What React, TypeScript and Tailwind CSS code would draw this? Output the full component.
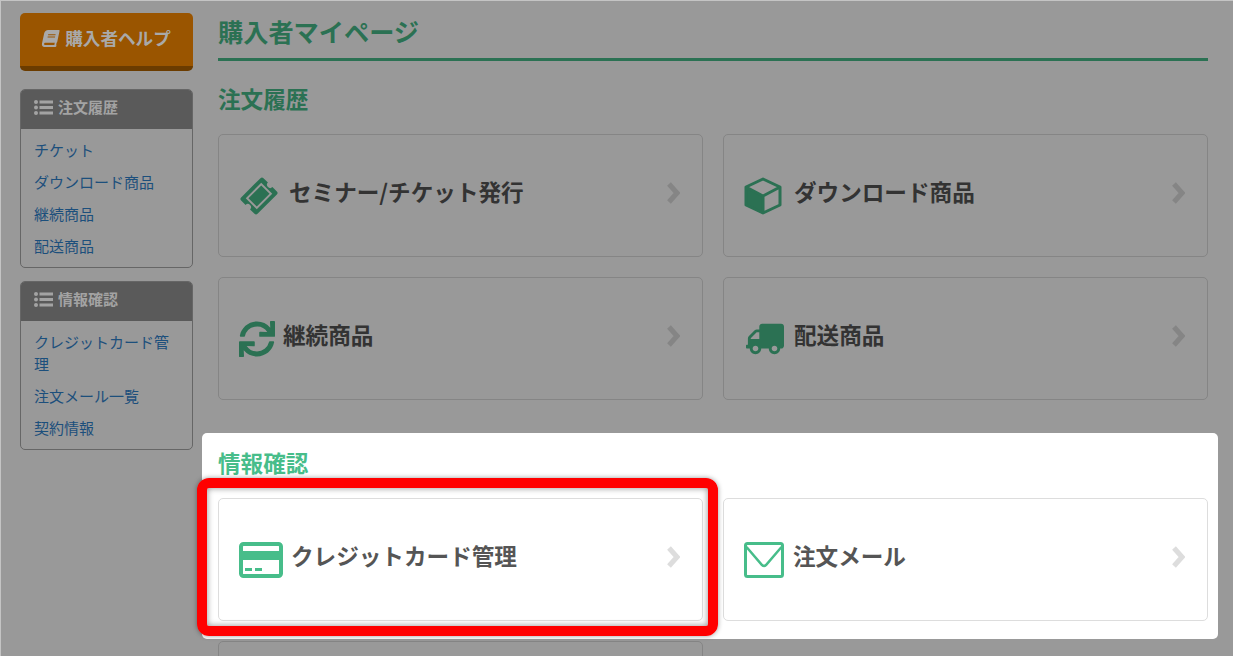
import { FaBook, FaSync, FaTruck } from 'react-icons/fa'
import type { ReactNode } from 'react'

const font = "font-['Noto_Sans_CJK_JP','Liberation_Sans',sans-serif]"

function ListIcon() {
  return (
    <svg viewBox="0 0 19 15" className="h-[15px] w-[19px] shrink-0" fill="currentColor">
      <circle cx="2" cy="2" r="2" />
      <circle cx="2" cy="7.5" r="2" />
      <circle cx="2" cy="13" r="2" />
      <rect x="5.5" y="0.5" width="13.5" height="3" />
      <rect x="5.5" y="6" width="13.5" height="3" />
      <rect x="5.5" y="11.5" width="13.5" height="3" />
    </svg>
  )
}

function TicketIcon() {
  return (
    <svg viewBox="0 0 38 38" className="h-[40px] w-[40px] shrink-0">
      <g transform="rotate(-45 19 19)">
        <path
          d="M6 8 H32 a2 2 0 0 1 2 2 V16 a3 3 0 0 0 0 6 V28 a2 2 0 0 1 -2 2 H6 a2 2 0 0 1 -2 -2 V22 a3 3 0 0 0 0 -6 V10 a2 2 0 0 1 2 -2 Z"
          fill="#2b7153"
        />
        <rect x="9.5" y="12.5" width="19" height="13" fill="#2b7153" stroke="#999999" strokeWidth="1.8" />
      </g>
    </svg>
  )
}

function CubeIcon() {
  return (
    <svg viewBox="0 0 38 38" className="h-[38px] w-[38px] shrink-0">
      <path d="M19 19 L2 10 V28 L19 37 Z" fill="#2b7153" />
      <path
        d="M19 2 L36 10 V28 L19 36 L2 28 V10 Z M2 10 L19 19 L36 10 M19 19 V36"
        fill="none"
        stroke="#2b7153"
        strokeWidth="3"
        strokeLinejoin="round"
      />
    </svg>
  )
}

function CardIcon() {
  return (
    <svg viewBox="0 0 44 36" className="h-[36px] w-[44px] shrink-0">
      <rect x="2" y="2" width="40" height="32" rx="2.5" fill="#ffffff" stroke="#47bd8a" strokeWidth="4" />
      <rect x="2" y="9" width="40" height="9" fill="#47bd8a" />
      <rect x="6" y="26" width="7" height="3" fill="#47bd8a" />
      <rect x="16" y="26" width="7" height="3" fill="#47bd8a" />
    </svg>
  )
}

function MailIcon() {
  return (
    <svg viewBox="0 0 40 36" className="h-[36px] w-[40px] shrink-0">
      <rect x="1.5" y="1.5" width="37" height="33" rx="2" fill="#ffffff" stroke="#47bd8a" strokeWidth="3" />
      <path d="M2.5 5 L18 23 a3 3 0 0 0 4 0 L37.5 5" fill="none" stroke="#47bd8a" strokeWidth="2.5" />
    </svg>
  )
}

function Chevron({ color }: { color: string }) {
  return (
    <svg viewBox="0 0 14 24" className="mb-[6px] h-6 w-[14px] shrink-0">
      <path d="M3 3 L11 12 L3 21" fill="none" stroke={color} strokeWidth="5" />
    </svg>
  )
}

function Card({
  icon,
  label,
  gap,
  pad,
  light,
}: {
  icon: ReactNode
  label: string
  gap: string
  pad: string
  light?: boolean
}) {
  return (
    <div
      className={
        light
          ? `flex h-[123px] items-center rounded-[5px] border border-[#dddddd] bg-white pr-[22px] ${pad}`
          : `flex h-[123px] items-center rounded-[5px] border border-[#858585] pr-[22px] ${pad}`
      }
    >
      <div className={`flex flex-1 items-center ${gap}`}>
        {icon}
        <span
          className={
            light
              ? 'pb-[6px] text-[22.6px] leading-none font-bold text-[#555555]'
              : 'pb-[6px] text-[22.6px] leading-none font-bold text-[#333333]'
          }
        >
          {label}
        </span>
      </div>
      <Chevron color={light ? '#dddddd' : '#858585'} />
    </div>
  )
}

function SideBox({ title, links }: { title: string; links: string[] }) {
  return (
    <div className="overflow-hidden rounded-[5px] border border-[#666666]">
      <div className="-m-px flex h-10 items-center gap-[5px] bg-[#5a5a5a] pb-[3px] pl-[14px] text-[#a3a3a3]">
        <ListIcon />
        <span className="text-[15px] font-bold">{title}</span>
      </div>
      <ul className="px-[13px] pt-[11px] text-[15px] leading-[21.5px] text-[#1c4f7c]">
        {links.map((l) => (
          <li key={l} className="pb-[10.5px]">
            {l}
          </li>
        ))}
      </ul>
    </div>
  )
}

export default function App() {
  return (
    <div className={`flex h-[656px] w-[1233px] overflow-hidden border-t border-l border-[#c4c4c4] bg-[#999999] ${font}`}>
      {/* Left column */}
      <aside className="ml-[19px] w-[173px] shrink-0 pt-3">
        <div className="flex h-[58px] items-center justify-center gap-[6px] rounded-[5px] border-b-[5px] border-[#6b3c00] bg-[#9a5500] pb-[2px] text-[#a9a9a9]">
          <FaBook className="h-[17px] w-[17px] -skew-x-12" />
          <span className="text-[17.6px] font-bold">購入者ヘルプ</span>
        </div>
        <div className="mt-[18px] flex flex-col gap-[13px]">
          <SideBox title="注文履歴" links={['チケット', 'ダウンロード商品', '継続商品', '配送商品']} />
          <SideBox title="情報確認" links={['クレジットカード管理', '注文メール一覧', '契約情報']} />
        </div>
      </aside>

      {/* Main */}
      <main className="ml-[25px] w-[990px] shrink-0">
        <h1 className="flex h-[60px] items-center border-b-[3px] border-[#2b7153] pt-[5px] text-[25.2px] leading-none font-bold text-[#2b7153]">
          購入者マイページ
        </h1>
        <h2 className="mt-[25px] mb-[22px] h-[26px] text-[22.6px] leading-[26px] font-bold text-[#2b7153]">注文履歴</h2>
        <div className="grid grid-cols-2 gap-5">
          <Card icon={<TicketIcon />} label="セミナー/チケット発行" gap="gap-[10px]" pad="pl-[20px]" />
          <Card icon={<CubeIcon />} label="ダウンロード商品" gap="gap-3" pad="pl-[20px]" />
          <Card
            icon={<FaSync className="h-[36px] w-[36px] shrink-0 text-[#2b7153]" />}
            label="継続商品"
            gap="gap-2"
            pad="pl-[20px]"
          />
          <Card
            icon={<FaTruck className="h-[32px] w-[38px] shrink-0 -scale-x-100 text-[#2b7153]" />}
            label="配送商品"
            gap="gap-[10px]"
            pad="pl-[22px]"
          />
        </div>

        {/* Highlighted section */}
        <section className="mt-[33px] -mr-[10px] -ml-4 rounded-[5px] bg-white pt-[17px] pr-[10px] pb-[18px] pl-4">
          <h2 className="mb-[22px] h-[26px] text-[22.6px] leading-[26px] font-bold text-[#47bd8a]">情報確認</h2>
          <div className="grid grid-cols-2 gap-5">
            <div className="relative">
              <Card icon={<CardIcon />} label="クレジットカード管理" gap="gap-[8px]" pad="pl-[20px]" light />
              <div className="absolute -top-5 -left-[21px] h-[158px] w-[521px] rounded-[12px] border-[10px] border-[#ff0000] shadow-[0_0_5px_rgba(0,0,0,0.4),inset_0_0_6px_rgba(0,0,0,0.45)]" />
            </div>
            <Card icon={<MailIcon />} label="注文メール" gap="gap-[9px]" pad="pl-[20px]" light />
          </div>
        </section>

        {/* Next row, cut off by the window */}
        <div className="mt-[2px] w-[485px]">
          <div className="h-[123px] rounded-[5px] border border-[#858585]" />
        </div>
      </main>
    </div>
  )
}
